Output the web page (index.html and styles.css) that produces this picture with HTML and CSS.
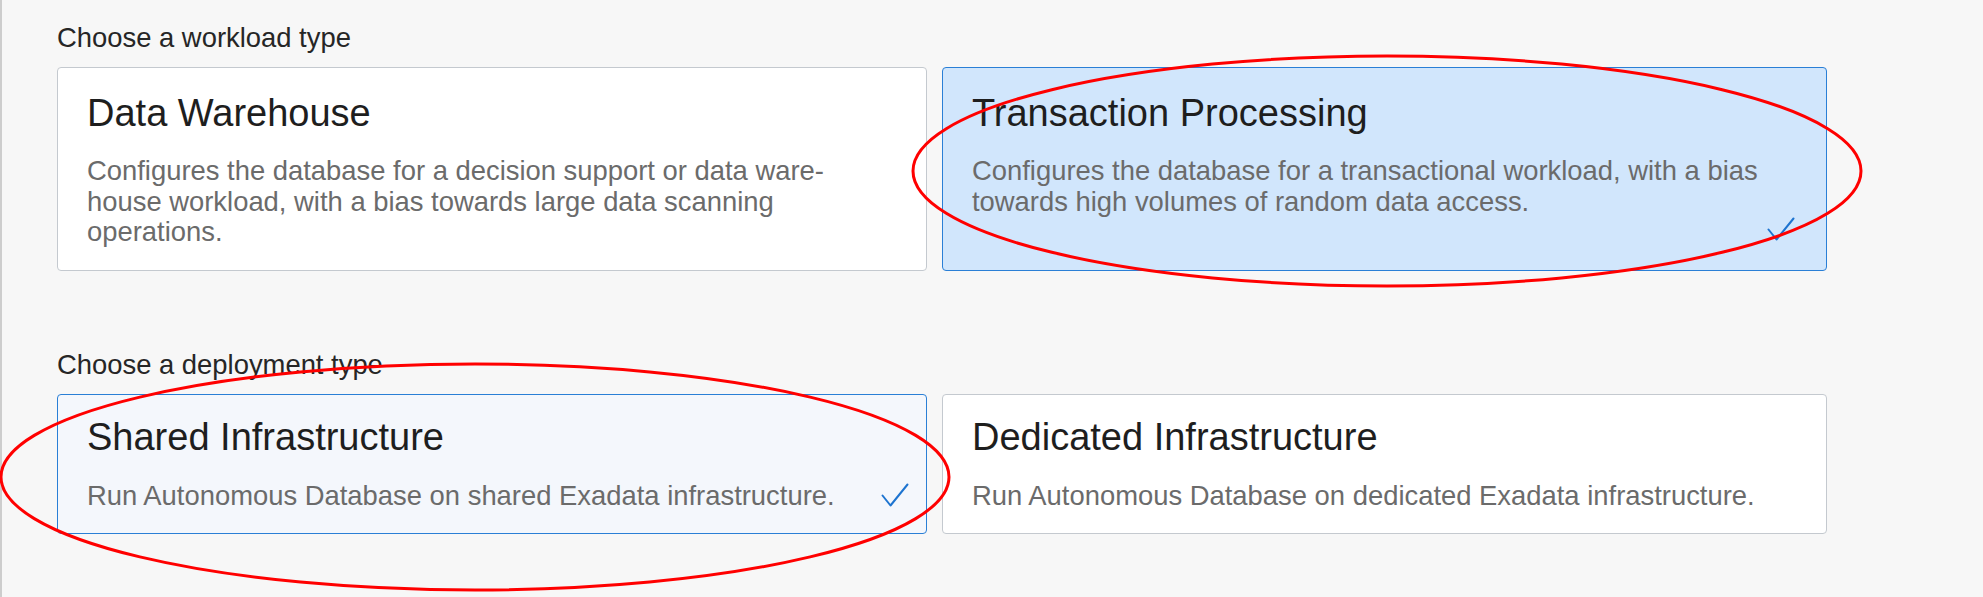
FILE: index.html
```html
<!DOCTYPE html>
<html lang="en">
<head>
<meta charset="utf-8">
<title>Choose workload and deployment type</title>
<link rel="stylesheet" href="styles.css">
</head>
<body>
<main class="page">
  <section class="group">
    <h2 class="group-label">Choose a workload type</h2>
    <div class="cards">
      <div class="card">
        <h3 class="card-title">Data Warehouse</h3>
        <p class="card-desc">Configures the database for a decision support or data ware&shy;house workload, with a bias towards large data scanning operations.</p>
      </div>
      <div class="card card--selected">
        <h3 class="card-title">Transaction Processing</h3>
        <p class="card-desc">Configures the database for a transactional workload, with a bias towards high volumes of random data access.</p>
        <svg class="check check--low" viewBox="0 0 28 24" aria-hidden="true"><path d="M1.5 12.5 L9.5 22.5 L26.5 1.5"/></svg>
      </div>
    </div>
  </section>

  <section class="group group--second">
    <h2 class="group-label">Choose a deployment type</h2>
    <div class="cards cards--compact">
      <div class="card card--active">
        <h3 class="card-title">Shared Infrastructure</h3>
        <p class="card-desc">Run Autonomous Database on shared Exadata infrastructure.</p>
        <svg class="check check--inline" viewBox="0 0 28 24" aria-hidden="true"><path d="M1.5 12.5 L9.5 22.5 L26.5 1.5"/></svg>
      </div>
      <div class="card">
        <h3 class="card-title">Dedicated Infrastructure</h3>
        <p class="card-desc">Run Autonomous Database on dedicated Exadata infrastructure.</p>
      </div>
    </div>
  </section>

  <svg class="annotations" viewBox="0 0 1983 597" aria-hidden="true">
    <ellipse cx="1387" cy="171" rx="474" ry="115"/>
    <ellipse cx="475" cy="477" rx="474" ry="113"/>
  </svg>
</main>
</body>
</html>
```

FILE: styles.css
```css
* {
  box-sizing: border-box;
}

html, body {
  margin: 0;
  padding: 0;
  height: 100%;
  background: #f7f7f7;
}

body {
  font-family: "Liberation Sans", Arial, Helvetica, sans-serif;
  overflow: hidden;
}

.page {
  position: relative;
  min-height: 597px;
  border-left: 2px solid #cdcdcd;
  padding: 22px 0 0 55px;
}

.group-label {
  margin: 0 0 13px 0;
  font-size: 27.4px;
  line-height: 32px;
  font-weight: normal;
  color: #262626;
}

.group--second {
  margin-top: 78px;
}

.cards {
  display: grid;
  grid-template-columns: 870px 885px;
  column-gap: 15px;
}

.card {
  position: relative;
  background: #ffffff;
  border: 1px solid #c4c9cf;
  border-radius: 4px;
  padding: 23px 56px 22.5px 29px;
}

.cards--compact .card {
  padding-top: 20px;
  padding-bottom: 21px;
}

.card--selected {
  background: #d1e6fc;
  border-color: #2a7fd6;
}

.card--active {
  background: #f4f7fc;
  border-color: #2a7fd6;
}

.card-title {
  margin: 0;
  font-size: 38px;
  line-height: 44px;
  font-weight: normal;
  color: #1e1e1e;
}

.card-desc {
  margin: 21px 0 0 0;
  font-size: 27.4px;
  line-height: 30.5px;
  color: #6b6b6b;
}

.cards--compact .card-desc {
  margin-top: 22px;
}

.check {
  position: absolute;
  width: 28px;
  height: 24px;
  fill: none;
  stroke: #1d74d0;
  stroke-width: 2;
  stroke-linecap: round;
  stroke-linejoin: round;
}

.check--low {
  right: 31px;
  bottom: 29px;
}

.check--inline {
  right: 17px;
  bottom: 26px;
}

.annotations {
  position: absolute;
  left: -2px;
  top: 0;
  width: 1983px;
  height: 597px;
  pointer-events: none;
  overflow: visible;
}

.annotations ellipse {
  fill: none;
  stroke: #ff0000;
  stroke-width: 3;
}
```
